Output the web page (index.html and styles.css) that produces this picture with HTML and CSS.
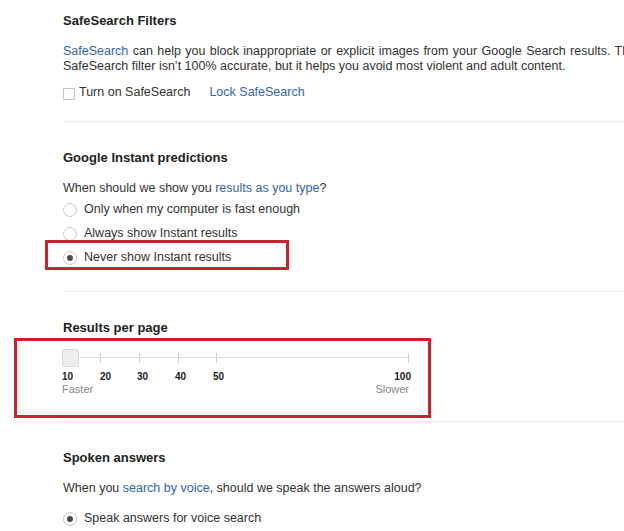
FILE: index.html
```html
<!DOCTYPE html>
<html lang="en">
<head>
<meta charset="utf-8">
<title>Search Settings</title>
<link rel="stylesheet" href="styles.css">
</head>
<body>
<main class="page">
  <section class="sec sec-safe">
    <h2 class="title">SafeSearch Filters</h2>
    <p class="desc desc-safe"><span class="line-wide"><a class="link" href="#">SafeSearch</a> can help you block inappropriate or explicit images from your Google Search results. The</span><br>SafeSearch filter isn’t 100% accurate, but it helps you avoid most violent and adult content.</p>
    <div class="check-row">
      <label class="check"><span class="box"></span>Turn on SafeSearch</label>
      <a class="link" href="#">Lock SafeSearch</a>
    </div>
  </section>

  <section class="sec sec-instant">
    <h2 class="title">Google Instant predictions</h2>
    <p class="desc">When should we show you <a class="link" href="#">results as you type</a>?</p>
    <div class="radios">
      <div class="radio-row"><span class="radio"></span>Only when my computer is fast enough</div>
      <div class="radio-row"><span class="radio"></span>Always show Instant results</div>
      <div class="radio-row marked"><span class="radio on"></span>Never show Instant results</div>
    </div>
  </section>

  <section class="sec sec-results">
    <h2 class="title">Results per page</h2>
    <div class="slider">
      <div class="track"></div>
      <span class="tick t20"></span>
      <span class="tick t30"></span>
      <span class="tick t40"></span>
      <span class="tick t50"></span>
      <span class="tick t100"></span>
      <span class="thumb"></span>
      <span class="num n10">10</span>
      <span class="num n20">20</span>
      <span class="num n30">30</span>
      <span class="num n40">40</span>
      <span class="num n50">50</span>
      <span class="num n100">100</span>
      <span class="speed faster">Faster</span>
      <span class="speed slower">Slower</span>
    </div>
  </section>

  <section class="sec sec-spoken">
    <h2 class="title">Spoken answers</h2>
    <p class="desc">When you <a class="link" href="#">search by voice</a>, should we speak the answers aloud?</p>
    <div class="radio-row spoken-row"><span class="radio on"></span>Speak answers for voice search</div>
  </section>
</main>
</body>
</html>
```

FILE: styles.css
```css
html, body {
  margin: 0;
  padding: 0;
  background: #ffffff;
  overflow: hidden;
}

body {
  width: 624px;
  height: 531px;
  font-family: "Liberation Sans", Arial, sans-serif;
  font-size: 12.5px;
  line-height: 15px;
  color: #333333;
}

.page {
  padding-left: 63px;
}

.sec {
  border-top: 1px solid #ebebeb;
}

.sec-safe {
  border-top: none;
  padding-top: 13px;
  padding-bottom: 21px;
}

.sec-instant {
  padding-top: 28px;
  padding-bottom: 26px;
}

.sec-results {
  padding-top: 28px;
  padding-bottom: 24px;
}

.sec-spoken {
  padding-top: 28px;
  padding-bottom: 0;
}

.title {
  margin: 0;
  font-size: 13px;
  line-height: 15px;
  font-weight: bold;
  color: #222222;
}

.desc {
  margin: 16px 0 0;
  white-space: nowrap;
}

.line-wide {
  word-spacing: 0.9px;
}

.link {
  color: #3563b3;
  text-decoration: none;
}

.check-row {
  display: flex;
  align-items: flex-start;
  margin-top: 11px;
}

.check {
  display: flex;
  align-items: flex-start;
  margin-right: 19px;
}

.box {
  width: 10px;
  height: 10px;
  margin-top: 3px;
  margin-right: 4px;
  border: 1px solid #c4c4c4;
  border-radius: 1px;
  background: #ffffff;
}

.radios {
  margin-top: 6px;
}

.radio-row {
  position: relative;
  display: flex;
  align-items: flex-start;
  margin-bottom: 9px;
}

.radio-row:last-child {
  margin-bottom: 0;
}

.radio {
  position: relative;
  box-sizing: border-box;
  width: 14px;
  height: 14px;
  margin-top: 1px;
  margin-right: 7px;
  border: 1px solid #c9c9c9;
  border-radius: 50%;
  background: #ffffff;
  flex: none;
}

.radio.on::after {
  content: "";
  position: absolute;
  left: 3px;
  top: 3px;
  width: 6px;
  height: 6px;
  border-radius: 50%;
  background: #4a4a4a;
}

.marked::after {
  content: "";
  position: absolute;
  left: -18px;
  top: -10px;
  width: 244px;
  height: 30px;
  box-sizing: border-box;
  border: 3px solid #d0202e;
}

.spoken-row {
  margin-top: 15px;
}

/* slider */
.slider {
  position: relative;
  width: 347px;
  height: 48px;
  margin-top: 14px;
  margin-left: -1px;
}

.slider::before {
  content: "";
  position: absolute;
  left: -48px;
  top: -11px;
  width: 417px;
  height: 80px;
  box-sizing: border-box;
  border: 3px solid #d0202e;
}

.track {
  position: absolute;
  left: 0;
  right: 0;
  top: 8px;
  height: 1px;
  background: #dddddd;
}

.tick {
  position: absolute;
  top: 4px;
  width: 1px;
  height: 10px;
  background: #cfcfcf;
}

.t20 { left: 38px; }
.t30 { left: 77px; }
.t40 { left: 116px; }
.t50 { left: 154px; }
.t100 { left: 346px; }

.thumb {
  position: absolute;
  left: 0;
  top: 0;
  width: 15px;
  height: 16px;
  border: 1px solid #d8d8d8;
  border-radius: 2px;
  background: #eeeeee;
}

.num {
  position: absolute;
  top: 22px;
  font-size: 10px;
  line-height: 12px;
  font-weight: bold;
  color: #222222;
}

.n10 { left: 0; }
.n20 { left: 38px; }
.n30 { left: 75px; }
.n40 { left: 113px; }
.n50 { left: 151px; }
.n100 { right: -2px; }

.speed {
  position: absolute;
  top: 34px;
  font-size: 11px;
  line-height: 13px;
  color: #888888;
}

.faster { left: 0; }
.slower { right: 0; }
```
